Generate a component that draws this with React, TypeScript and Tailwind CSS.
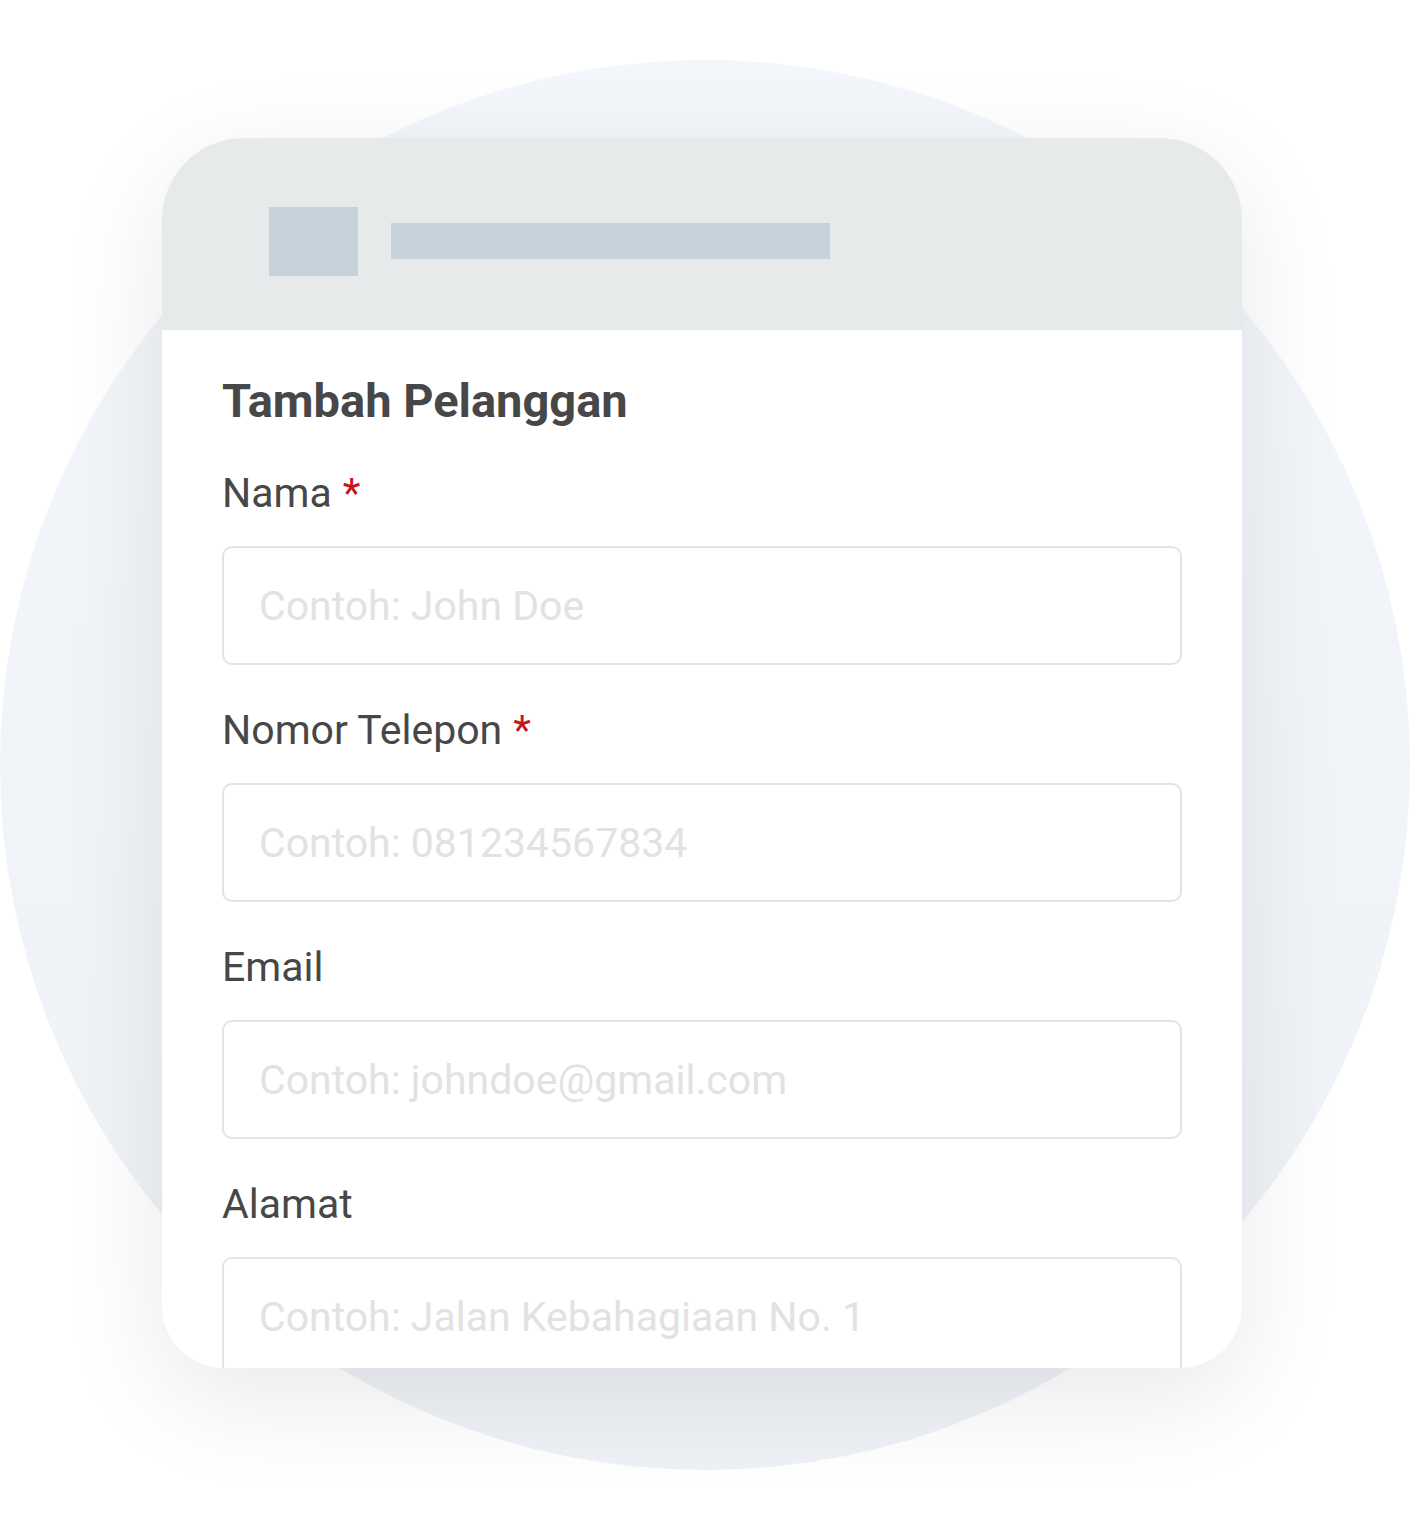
const fields = [
  { label: "Nama", required: true, placeholder: "Contoh: John Doe" },
  { label: "Nomor Telepon", required: true, placeholder: "Contoh: 081234567834" },
  { label: "Email", required: false, placeholder: "Contoh: johndoe@gmail.com" },
  { label: "Alamat", required: false, placeholder: "Contoh: Jalan Kebahagiaan No. 1" },
];

function Field({ label, required, placeholder }: { label: string; required: boolean; placeholder: string }) {
  return (
    <div className="flex flex-col gap-[29px]">
      <div className="text-[41px] leading-[48px] text-[#474747]">
        {label}
        {required && <span className="ml-[11px] text-[#c4161c]">*</span>}
      </div>
      <div className="flex h-[119px] shrink-0 items-center rounded-[10px] border-2 border-[#e4e4e4] bg-white px-[35px]">
        <span className="text-[41px] leading-[48px] text-[#e2e2e2]">{placeholder}</span>
      </div>
    </div>
  );
}

export default function App() {
  return (
    <div
      className="flex min-h-[1530px] w-[1410px] bg-white pt-[60px]"
      style={{ fontFamily: "Roboto, 'Noto Sans', sans-serif" }}
    >
      <div className="flex h-[1410px] w-[1410px] rounded-full bg-gradient-to-b from-[#f3f6fb] to-[#eef2f7] pl-[162px] pt-[78px]">
        <div className="flex h-[1230px] w-[1080px] flex-col overflow-hidden rounded-t-[82px] rounded-b-[62px] bg-white shadow-[0_30px_110px_rgba(0,0,0,0.09)]">
          <div className="flex h-[192px] shrink-0 items-start gap-[33px] bg-[#e6eaeb] pl-[107px] pt-[69px]">
            <div className="h-[69px] w-[89px] bg-[#c7d1da]" />
            <div className="mt-[16px] h-[36px] w-[439px] bg-[#c7d1da]" />
          </div>
          <div className="flex flex-col px-[60px] pt-[43px]">
            <h1 className="text-[47px] font-bold leading-[56px] text-[#474747]">Tambah Pelanggan</h1>
            <div className="mt-[40px] flex flex-col gap-[41px]">
              {fields.map((f) => (
                <Field key={f.label} {...f} />
              ))}
            </div>
          </div>
        </div>
      </div>
    </div>
  );
}
